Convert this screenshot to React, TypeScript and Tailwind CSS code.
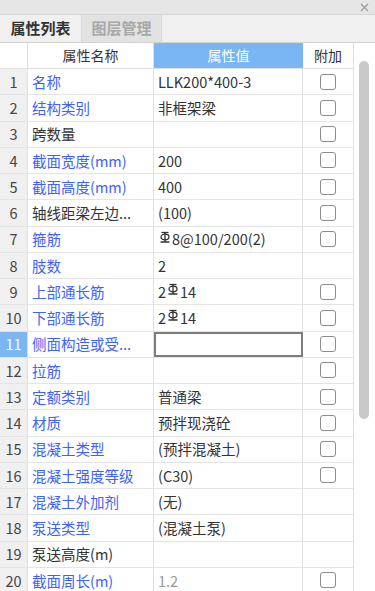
import React from 'react';

interface Row {
  name: string;
  value: string;
  blue: boolean;
  check: boolean;
  bar?: 'pre' | 'mid';
  muted?: boolean;
}

const rows: Row[] = [
  { name: '名称', value: 'LLK200*400-3', blue: true, check: true },
  { name: '结构类别', value: '非框架梁', blue: true, check: true },
  { name: '跨数量', value: '', blue: false, check: true },
  { name: '截面宽度(mm)', value: '200', blue: true, check: true },
  { name: '截面高度(mm)', value: '400', blue: true, check: true },
  { name: '轴线距梁左边...', value: '(100)', blue: false, check: true },
  { name: '箍筋', value: '8@100/200(2)', blue: true, check: true, bar: 'pre' },
  { name: '肢数', value: '2', blue: true, check: false },
  { name: '上部通长筋', value: '14', blue: true, check: true, bar: 'mid' },
  { name: '下部通长筋', value: '14', blue: true, check: true, bar: 'mid' },
  { name: '侧面构造或受...', value: '', blue: true, check: true },
  { name: '拉筋', value: '', blue: true, check: true },
  { name: '定额类别', value: '普通梁', blue: true, check: true },
  { name: '材质', value: '预拌现浇砼', blue: true, check: true },
  { name: '混凝土类型', value: '(预拌混凝土)', blue: true, check: true },
  { name: '混凝土强度等级', value: '(C30)', blue: true, check: true },
  { name: '混凝土外加剂', value: '(无)', blue: true, check: false },
  { name: '泵送类型', value: '(混凝土泵)', blue: true, check: false },
  { name: '泵送高度(m)', value: '', blue: false, check: false },
  { name: '截面周长(m)', value: '1.2', blue: true, check: true, muted: true },
];

// 三级钢筋符号
function BarSymbol() {
  return (
    <svg width="12" height="13" viewBox="0 0 12 13" className="inline-block mx-[1px] -mt-[4px]">
      <path d="M2.5 1.5 H9.5" stroke="#333" strokeWidth="1.3" fill="none" />
      <ellipse cx="6" cy="6" rx="4" ry="2.8" stroke="#333" strokeWidth="1.3" fill="none" />
      <path d="M6 1.5 V11 M1.5 11 H10.5" stroke="#333" strokeWidth="1.3" fill="none" />
    </svg>
  );
}

function CheckBox() {
  return <div className="w-[16px] h-[16px] rounded-[3px] border-[1.5px] border-[#8c8c8c] bg-white" />;
}

export default function App() {
  const selected = 10;

  return (
    <div
      className="w-[375px] h-[591px] overflow-hidden bg-white flex flex-col text-[#333]"
      style={{ fontFamily: '"Noto Sans CJK SC", "Noto Sans", sans-serif' }}
    >
      {/* 标题栏 */}
      <div className="h-[15px] bg-[#e6e6e6] border-b border-[#d6d6d6] flex justify-end items-center pr-[6px]">
        <svg width="9" height="9" viewBox="0 0 9 9">
          <path d="M1 1 L8 8 M8 1 L1 8" stroke="#9a9a9a" strokeWidth="1.2" />
        </svg>
      </div>

      {/* 页签 */}
      <div className="h-[28px] bg-[#f0f0f0] border-b border-[#d2d2d2] flex items-stretch">
        <div className="w-[82px] flex items-center justify-center text-[15px] font-bold text-[#333] bg-[#f0f0f0] border-r border-[#d8d8d8]">
          属性列表
        </div>
        <div className="w-[80px] flex items-center justify-center text-[15px] font-bold text-[#a8a8a8] bg-[#e2e2e2] border-r border-[#d8d8d8]">
          图层管理
        </div>
      </div>

      <div className="flex flex-1 min-h-0">
        {/* 表格 */}
        <div className="w-[354px] flex flex-col border-r border-[#e0e0e0]">
          <div className="h-[26px] flex text-[14px] border-b border-[#e0e0e0] shrink-0">
            <div className="w-[28px] border-r border-[#e0e0e0]" />
            <div className="w-[126px] border-r border-[#e0e0e0] flex items-center justify-center">属性名称</div>
            <div className="w-[149px] bg-[#7ab6f4] flex items-center justify-center text-white">属性值</div>
            <div className="flex-1 flex items-center justify-center">附加</div>
          </div>

          {rows.map((r, i) => {
            const sel = i === selected;
            return (
              <div key={i} className="h-[26.25px] flex text-[14.5px] border-b border-[#e4e4e4] shrink-0">
                <div
                  className={
                    sel
                      ? 'w-[28px] bg-[#7ab6f4] text-white flex items-center justify-center border-r border-[#e0e0e0]'
                      : 'w-[28px] bg-[#f0f0f0] text-[#444] flex items-center justify-center border-r border-[#e0e0e0]'
                  }
                >
                  {i + 1}
                </div>
                <div
                  className={
                    r.blue
                      ? 'w-[126px] pl-[4px] flex items-center text-[#3e62f2] border-r border-[#e0e0e0] whitespace-nowrap overflow-hidden'
                      : 'w-[126px] pl-[4px] flex items-center text-[#333] border-r border-[#e0e0e0] whitespace-nowrap overflow-hidden'
                  }
                >
                  {r.name}
                </div>
                <div
                  className={
                    sel
                      ? 'w-[149px] border-2 border-[#7d7d7d]'
                      : r.muted
                      ? 'w-[149px] pl-[4px] flex items-center text-[#999] border-r border-[#e0e0e0]'
                      : 'w-[149px] pl-[4px] flex items-center text-[#333] border-r border-[#e0e0e0] whitespace-nowrap'
                  }
                >
                  {!sel && r.bar === 'pre' && <BarSymbol />}
                  {!sel && r.bar === 'mid' && (
                    <>
                      2<BarSymbol />
                    </>
                  )}
                  {!sel && r.value}
                </div>
                <div className="flex-1 flex items-center justify-center">{r.check && <CheckBox />}</div>
              </div>
            );
          })}
        </div>

        {/* 滚动条 */}
        <div className="flex-1 bg-white pt-[18px] pl-[5px] pr-[6px]">
          <div className="w-[10px] h-[358px] rounded-full bg-[#c9c9c9]" />
        </div>
      </div>
    </div>
  );
}
